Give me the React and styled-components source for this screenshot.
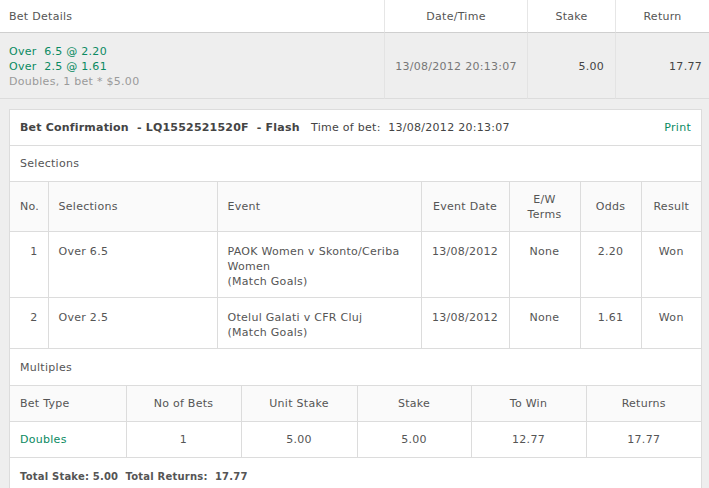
import styled, { createGlobalStyle } from 'styled-components';

const GlobalStyle = createGlobalStyle`
  html, body {
    margin: 0;
    padding: 0;
    background: #eeeeee;
  }
  body {
    font-family: "DejaVu Sans", Verdana, sans-serif;
    font-size: 11px;
    letter-spacing: 0.28px;
    color: #555;
  }
`;

const Summary = styled.div`
  display: grid;
  grid-template-columns: 384px 143px 88px 1fr;
`;

const SummaryHead = styled.div`
  height: 32px;
  display: flex;
  align-items: center;
  justify-content: ${({ align }) => align || 'center'};
  padding: 0 9px;
  background: #fff;
  color: #555;
  border-bottom: 1px solid #cfcfcf;
  border-left: ${({ first }) => first ? 'none' : '1px solid #e6e6e6'};
`;

const SummaryCell = styled.div`
  height: 64px;
  display: flex;
  flex-direction: column;
  justify-content: center;
  align-items: ${({ align }) => align || 'center'};
  padding: 1px ${({ pr }) => pr || 9}px 0 9px;
  background: #eeeeee;
  border-bottom: 1px solid #dcdcdc;
  border-left: ${({ first }) => first ? 'none' : '1px solid #e3e3e3'};
  color: ${({ dark }) => dark ? '#444' : '#777'};
  line-height: 15px;
`;

const Pick = styled.div`
  color: ${({ muted }) => muted ? '#9a9a9a' : '#0a8a62'};
  white-space: pre;
`;

const Outer = styled.div`
  padding: 10px 7px 0 9px;
`;

const Panel = styled.div`
  background: #fff;
  border: 1px solid #dcdcdc;
`;

const PanelHeader = styled.div`
  height: 35px;
  display: flex;
  align-items: center;
  padding: 0 10px;
  border-bottom: 1px solid #dcdcdc;
  color: #444;
  white-space: pre;
`;

const Strong = styled.span`
  font-weight: bold;
  letter-spacing: 0.2px;
`;

const PrintLink = styled.a`
  margin-left: auto;
  color: #0a8a62;
  text-decoration: none;
`;

const SectionLabel = styled.div`
  height: ${({ h }) => h || 35}px;
  display: flex;
  align-items: center;
  padding: 0 10px;
  border-bottom: 1px solid #dcdcdc;
  color: #555;
`;

const Table = styled.table`
  width: 100%;
  table-layout: fixed;
  border-collapse: collapse;
`;

const Th = styled.th`
  font-weight: normal;
  color: #555;
  background: #fafafa;
  height: ${({ h }) => h || 35}px;
  padding: 0 10px;
  text-align: ${({ align }) => align || 'center'};
  vertical-align: middle;
  line-height: 15px;
  border-left: 1px solid #dcdcdc;
  border-bottom: 1px solid #dcdcdc;
  &:first-child { border-left: none; }
`;

const Td = styled.td`
  color: #555;
  padding: ${({ top }) => top ? '12px 10px 8px' : '0 10px'};
  height: ${({ h }) => h ? `${h}px` : 'auto'};
  text-align: ${({ align }) => align || 'center'};
  vertical-align: ${({ top }) => top ? 'top' : 'middle'};
  line-height: 15px;
  border-left: 1px solid #dcdcdc;
  border-bottom: 1px solid #dcdcdc;
  &:first-child { border-left: none; }
`;

const GreenText = styled.span`
  color: #0a8a62;
`;

const Totals = styled.div`
  height: 36px;
  display: flex;
  align-items: center;
  padding: 0 10px;
  font-size: 10px;
  font-weight: bold;
  letter-spacing: 0.2px;
  color: #555;
  white-space: pre;
`;

const selections = [
  { no: 1, sel: 'Over 6.5', event: ['PAOK Women v Skonto/Ceriba Women', '(Match Goals)'], date: '13/08/2012', ew: 'None', odds: '2.20', result: 'Won' },
  { no: 2, sel: 'Over 2.5', event: ['Otelul Galati v CFR Cluj', '(Match Goals)'], date: '13/08/2012', ew: 'None', odds: '1.61', result: 'Won' },
];

export default function App() {
  return (
    <>
      <GlobalStyle />
      <Summary>
        <SummaryHead first align="flex-start">Bet Details</SummaryHead>
        <SummaryHead>Date/Time</SummaryHead>
        <SummaryHead>Stake</SummaryHead>
        <SummaryHead>Return</SummaryHead>
        <SummaryCell first align="flex-start">
          <Pick>{'Over  6.5 @ 2.20'}</Pick>
          <Pick>{'Over  2.5 @ 1.61'}</Pick>
          <Pick muted>Doubles, 1 bet * $5.00</Pick>
        </SummaryCell>
        <SummaryCell>13/08/2012 20:13:07</SummaryCell>
        <SummaryCell dark align="flex-end" pr={11}>5.00</SummaryCell>
        <SummaryCell dark align="flex-end" pr={7}>17.77</SummaryCell>
      </Summary>
      <Outer>
        <Panel>
          <PanelHeader>
            <Strong>{'Bet Confirmation  - LQ1552521520F  - Flash'}</Strong>
            {'   Time of bet:  13/08/2012 20:13:07'}
            <PrintLink href="#">Print</PrintLink>
          </PanelHeader>
          <SectionLabel>Selections</SectionLabel>
          <Table>
            <colgroup>
              <col style={{ width: 38 }} />
              <col style={{ width: 169 }} />
              <col style={{ width: 204 }} />
              <col style={{ width: 88 }} />
              <col style={{ width: 71 }} />
              <col style={{ width: 61 }} />
              <col />
            </colgroup>
            <thead>
              <tr>
                <Th h={49} align="left">No.</Th>
                <Th h={49} align="left">Selections</Th>
                <Th h={49} align="left">Event</Th>
                <Th h={49}>Event Date</Th>
                <Th h={49}>E/W<br />Terms</Th>
                <Th h={49}>Odds</Th>
                <Th h={49}>Result</Th>
              </tr>
            </thead>
            <tbody>
              {selections.map((s) => (
                <tr key={s.no}>
                  <Td top align="right">{s.no}</Td>
                  <Td top align="left">{s.sel}</Td>
                  <Td top align="left">{s.event[0]}<br />{s.event[1]}</Td>
                  <Td top>{s.date}</Td>
                  <Td top>{s.ew}</Td>
                  <Td top>{s.odds}</Td>
                  <Td top>{s.result}</Td>
                </tr>
              ))}
            </tbody>
          </Table>
          <SectionLabel h={36}>Multiples</SectionLabel>
          <Table>
            <colgroup>
              <col style={{ width: 116 }} />
              <col style={{ width: 115 }} />
              <col style={{ width: 116 }} />
              <col style={{ width: 114 }} />
              <col style={{ width: 115 }} />
              <col />
            </colgroup>
            <thead>
              <tr>
                <Th align="left">Bet Type</Th>
                <Th>No of Bets</Th>
                <Th>Unit Stake</Th>
                <Th>Stake</Th>
                <Th>To Win</Th>
                <Th>Returns</Th>
              </tr>
            </thead>
            <tbody>
              <tr>
                <Td h={35} align="left"><GreenText>Doubles</GreenText></Td>
                <Td h={35}>1</Td>
                <Td h={35}>5.00</Td>
                <Td h={35}>5.00</Td>
                <Td h={35}>12.77</Td>
                <Td h={35}>17.77</Td>
              </tr>
            </tbody>
          </Table>
          <Totals>{'Total Stake: 5.00  Total Returns:  17.77'}</Totals>
        </Panel>
      </Outer>
    </>
  );
}
